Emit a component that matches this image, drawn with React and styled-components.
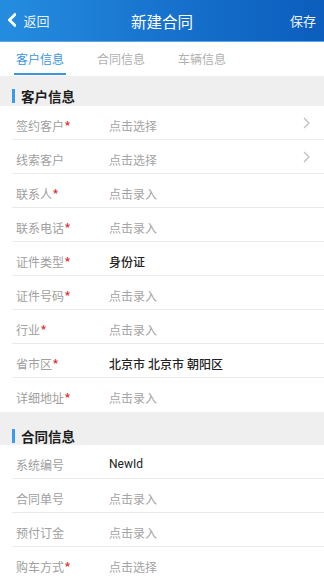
import styled, { createGlobalStyle } from 'styled-components'

const GlobalStyle = createGlobalStyle`
  html, body {
    margin: 0;
    padding: 0;
    background: #efefef;
    font-family: Roboto, "Noto Sans CJK SC", sans-serif;
  }
  * { box-sizing: border-box; }
`

const customerRows = [
  { label: '签约客户', required: true, value: '点击选择', arrow: true },
  { label: '线索客户', value: '点击选择', arrow: true },
  { label: '联系人', required: true, value: '点击录入' },
  { label: '联系电话', required: true, value: '点击录入' },
  { label: '证件类型', required: true, value: '身份证', filled: 500 },
  { label: '证件号码', required: true, value: '点击录入' },
  { label: '行业', required: true, value: '点击录入' },
  { label: '省市区', required: true, value: '北京市 北京市 朝阳区', filled: 500 },
  { label: '详细地址', required: true, value: '点击录入' },
]

const contractRows = [
  { label: '系统编号', value: 'NewId', filled: 400 },
  { label: '合同单号', value: '点击录入' },
  { label: '预付订金', value: '点击录入' },
  { label: '购车方式', required: true, value: '点击选择' },
]

const tabs = ['客户信息', '合同信息', '车辆信息']

const Chevron = ({ color = '#fff', size = 14, weight = 2 }) => (
  <svg width={size * 0.6} height={size} viewBox="0 0 6 10" fill="none">
    <path d="M5 1L1 5l4 4" stroke={color} strokeWidth={weight} strokeLinecap="round" strokeLinejoin="round" />
  </svg>
)

const Row = ({ label, required, value, filled, arrow }) => (
  <FieldRow>
    <Label>
      {label}
      {required && <Star>*</Star>}
    </Label>
    <Value weight={filled}>{value}</Value>
    {arrow && (
      <ArrowBox>
        <svg width="7" height="12" viewBox="0 0 7 12" fill="none">
          <path d="M1 1l5 5-5 5" stroke="#bdbdbd" strokeWidth="1.2" />
        </svg>
      </ArrowBox>
    )}
  </FieldRow>
)

const App = () => {
  return <>
    <GlobalStyle />
    <Page>
      <Header>
        <Back>
          <Chevron />
          <span>返回</span>
        </Back>
        <Title>新建合同</Title>
        <Save>保存</Save>
      </Header>

      <Tabs>
        {tabs.map((t, i) => (
          <Tab key={t} active={i === 0}>{t}</Tab>
        ))}
      </Tabs>

      <SectionHeader>
        <Bar />
        客户信息
      </SectionHeader>
      <List>
        {customerRows.map(r => <Row key={r.label} {...r} />)}
      </List>

      <SectionHeader spaced>
        <Bar />
        合同信息
      </SectionHeader>
      <List>
        {contractRows.map(r => <Row key={r.label} {...r} />)}
      </List>
    </Page>
  </>
}

const Page = styled.div`
  width: 324px;
  height: 576px;
  overflow: hidden;
  background: #efefef;
`

const Header = styled.header`
  position: relative;
  height: 42px;
  display: flex;
  align-items: center;
  justify-content: space-between;
  padding: 0 8px 1px 8px;
  background: linear-gradient(90deg, #258ddf 0%, #1670cc 55%, #0c5dbd 100%);
  color: #fff;
  border-bottom: 1px solid #5aa6ea;
`

const Back = styled.div`
  display: flex;
  align-items: center;
  gap: 7px;
  font-size: 13px;
  span { color: #e8f2fc; }
`

const Title = styled.h1`
  position: absolute;
  left: 0;
  right: 0;
  top: 0;
  bottom: 0;
  margin: 0;
  display: flex;
  align-items: center;
  justify-content: center;
  font-size: 15.5px;
  font-weight: 400;
  pointer-events: none;
`

const Save = styled.div`
  font-size: 13px;
  color: #e8f2fc;
`

const Tabs = styled.nav`
  height: 34px;
  background: #fff;
  display: flex;
  padding-left: 14px;
  gap: 29px;
`

const Tab = styled.div`
  width: 52px;
  display: flex;
  align-items: center;
  justify-content: center;
  font-size: 12px;
  color: ${p => (p.active ? '#3996e2' : '#b0b0b0')};
  border-bottom: 2px solid ${p => (p.active ? '#3996e2' : 'transparent')};
  margin-bottom: 1px;
  padding-top: 1px;
`

const SectionHeader = styled.div`
  height: ${p => (p.spaced ? '33px' : '30px')};
  display: flex;
  align-items: center;
  padding: ${p => (p.spaced ? '14px' : '10px')} 12px 0;
  gap: 6px;
  font-size: 13.5px;
  font-weight: 700;
  color: #1e1e1e;
  background: #efefef;
`

const Bar = styled.span`
  width: 3px;
  height: 14px;
  background: #3a9af0;
`

const List = styled.div`
  background: #fff;
`

const FieldRow = styled.div`
  height: 34px;
  display: flex;
  align-items: center;
  margin-left: 12px;
  padding: 5px 14px 0 4px;
  border-bottom: 1px solid #ebebeb;
  &:last-child { border-bottom: none; }
`

const Label = styled.div`
  width: 93px;
  font-size: 12px;
  color: #a0a0a0;
`

const Star = styled.span`
  color: #d9262c;
  font-size: 11px;
  font-weight: 700;
  position: relative;
  top: -2px;
  margin-left: 1px;
`

const Value = styled.div`
  flex: 1;
  font-size: 12px;
  color: ${p => (p.weight ? '#222' : '#a4a4a4')};
  font-weight: ${p => p.weight || 400};
`

const ArrowBox = styled.div`
  display: flex;
  align-items: center;
  margin-top: -4px;
`

export default App
